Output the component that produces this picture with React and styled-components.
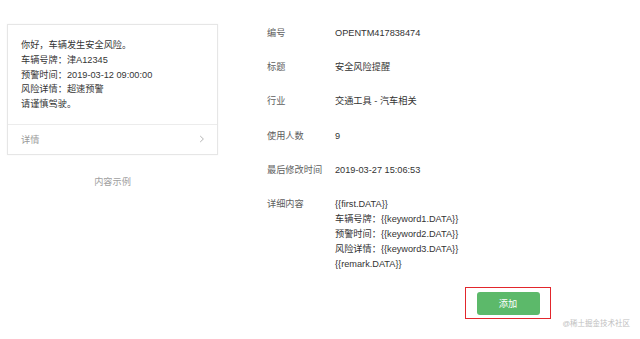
import styled, { createGlobalStyle } from 'styled-components';

const GlobalStyle = createGlobalStyle`
html, body {
    margin: 0;
    padding: 0;
    background: #ffffff;
}
body {
    font-family: "Liberation Sans", "Noto Sans CJK SC", sans-serif;
    font-size: 9.2px;
    color: #333333;
}
`;

const previewLines = [
    '你好，车辆发生安全风险。',
    '车辆号牌：津A12345',
    '预警时间：2019-03-12 09:00:00',
    '风险详情：超速预警',
    '请谨慎驾驶。',
];

const infoRows = [
    { label: '编号', value: ['OPENTM417838474'] },
    { label: '标题', value: ['安全风险提醒'] },
    { label: '行业', value: ['交通工具 - 汽车相关'] },
    { label: '使用人数', value: ['9'] },
    { label: '最后修改时间', value: ['2019-03-27 15:06:53'] },
    {
        label: '详细内容',
        value: [
            '{{first.DATA}}',
            '车辆号牌：{{keyword1.DATA}}',
            '预警时间：{{keyword2.DATA}}',
            '风险详情：{{keyword3.DATA}}',
            '{{remark.DATA}}',
        ],
    },
];

function App() {
    return (
        <>
            <GlobalStyle />
            <Page>
                <PreviewColumn>
                    <PreviewCard>
                        <PreviewBody>
                            {previewLines.map((line) => (
                                <p key={line}>{line}</p>
                            ))}
                        </PreviewBody>
                        <PreviewFooter>
                            <span>详情</span>
                            <svg width="6" height="8" viewBox="0 0 6 8">
                                <path d="M1.2 1 L4.4 4 L1.2 7" fill="none" stroke="#b5b5b5" strokeWidth="1" />
                            </svg>
                        </PreviewFooter>
                    </PreviewCard>
                    <Caption>内容示例</Caption>
                </PreviewColumn>
                <InfoColumn>
                    {infoRows.map((row) => (
                        <InfoRow key={row.label}>
                            <Label>{row.label}</Label>
                            <Value>
                                {row.value.map((line) => (
                                    <div key={line}>{line}</div>
                                ))}
                            </Value>
                        </InfoRow>
                    ))}
                    <ActionRow>
                        <Highlight>
                            <AddButton>添加</AddButton>
                        </Highlight>
                    </ActionRow>
                </InfoColumn>
                <Watermark>@稀土掘金技术社区</Watermark>
            </Page>
        </>
    );
}

const Page = styled.div`
position: relative;
width: 640px;
height: 339px;
display: flex;
align-items: flex-start;
overflow: hidden;
`;

const PreviewColumn = styled.div`
width: 211px;
margin-left: 7px;
padding-top: 24px;
display: flex;
flex-direction: column;
`;

const PreviewCard = styled.div`
border: 1px solid #e6e6e6;
background: #ffffff;
box-shadow: 0 0 2px rgba(0, 0, 0, 0.04);
`;

const PreviewBody = styled.div`
padding: 13px 12px 12px 13px;
border-bottom: 1px solid #ececec;
p {
    margin: 0;
    line-height: 14.8px;
    color: #353535;
}
`;

const PreviewFooter = styled.div`
height: 29px;
padding: 0 13px 0 13px;
display: flex;
align-items: center;
justify-content: space-between;
color: #9a9a9a;
svg {
    margin-right: -1px;
}
`;

const Caption = styled.div`
margin-top: 20px;
text-align: center;
color: #a0a0a0;
line-height: 15px;
`;

const InfoColumn = styled.div`
margin-left: 49px;
padding-top: 25.5px;
display: flex;
flex-direction: column;
`;

const InfoRow = styled.div`
display: flex;
line-height: 15px;
& + & {
    margin-top: 19.4px;
}
`;

const Label = styled.div`
width: 68px;
color: #5e5e5e;
`;

const Value = styled.div`
color: #333333;
`;

const ActionRow = styled.div`
display: flex;
padding-left: 198px;
margin-top: 14.5px;
`;

const Highlight = styled.div`
border: 1.5px solid #e2262c;
padding: 4px 10px 3px 10.5px;
`;

const AddButton = styled.button`
width: 63px;
height: 23px;
border: none;
border-radius: 3px;
background: #5cb96a;
color: #ffffff;
font-family: "Liberation Sans", "Noto Sans CJK SC", sans-serif;
font-size: 9.2px;
padding: 0;
`;

const Watermark = styled.div`
position: absolute;
right: 10px;
bottom: 11px;
font-size: 7.5px;
color: #c0c0c0;
`;

export default App;
